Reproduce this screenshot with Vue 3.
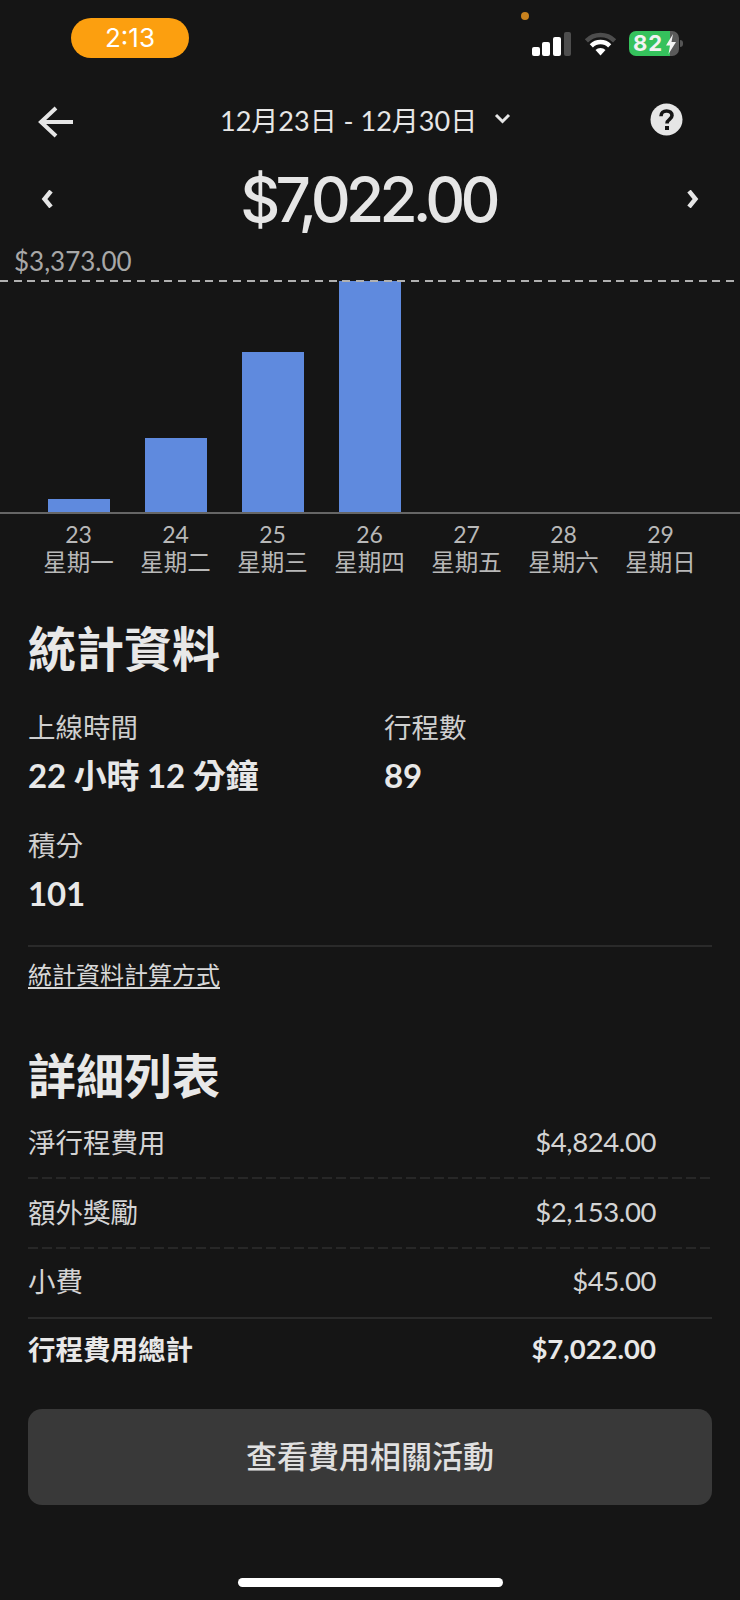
<script setup>
const maxValue = 3373
const plotHeight = 231
const days = [
  { date: '23', name: '星期一', value: 190 },
  { date: '24', name: '星期二', value: 1080 },
  { date: '25', name: '星期三', value: 2336 },
  { date: '26', name: '星期四', value: 3373 },
  { date: '27', name: '星期五', value: 0 },
  { date: '28', name: '星期六', value: 0 },
  { date: '29', name: '星期日', value: 0 }
]
const barHeight = (v) => `${Math.round((v / maxValue) * plotHeight)}px`
const rows = [
  { label: '淨行程費用', amount: '$4,824.00', line: 'dash' },
  { label: '額外獎勵', amount: '$2,153.00', line: 'dash' },
  { label: '小費', amount: '$45.00', line: 'solid' },
  { label: '行程費用總計', amount: '$7,022.00', line: 'none', total: true }
]
</script>

<template>
  <div class="screen">
    <div class="status">
      <div class="pill">2:13</div>
      <div class="status-right">
        <span class="dot"></span>
        <svg class="signal" width="40" height="24" viewBox="0 0 40 24">
          <rect x="0" y="15" width="8" height="9" rx="2" fill="#fff" />
          <rect x="10" y="10" width="8" height="14" rx="2" fill="#fff" />
          <rect x="21" y="5" width="8" height="19" rx="2" fill="#fff" />
          <rect x="32" y="0" width="7" height="24" rx="2" fill="#4d4d4d" />
        </svg>
        <svg class="wifi" width="33" height="24" viewBox="0 0 33 24">
          <path d="M2.4 8.9A20 20 0 0 1 30.6 8.9" fill="none" stroke="#4d4d4d" stroke-width="4.5" />
          <path d="M7.3 13.8A13 13 0 0 1 25.7 13.8" fill="none" stroke="#fff" stroke-width="4.5" />
          <path d="M16.5 23.5L11.5 18A7 7 0 0 1 21.5 18Z" fill="#fff" />
        </svg>
        <div class="battery">
          <span class="battery-num">82</span>
          <svg class="bolt" width="10" height="20" viewBox="0 0 10 20">
            <path d="M7 0L0 11.5H4L2.5 20L10 8H5.5Z" fill="#f4f4f4" />
          </svg>
        </div>
        <span class="nub"></span>
      </div>
    </div>

    <div class="topbar">
      <svg class="back" width="36" height="32" viewBox="0 0 36 32">
        <path d="M18 2L3 16L18 30M3 16H35" fill="none" stroke="#e6e6e6" stroke-width="4" />
      </svg>
      <div class="range">
        <span>12月23日 - 12月30日</span>
        <svg width="17" height="11" viewBox="0 0 17 11">
          <path d="M2 2L8.5 8.5L15 2" fill="none" stroke="#e6e6e6" stroke-width="3" />
        </svg>
      </div>
      <svg class="help" width="33" height="33" viewBox="0 0 33 33">
        <circle cx="16.5" cy="16.5" r="16" fill="#e6e6e6" />
        <path d="M11 13.2C11 9.8 13.4 8 16.6 8C19.8 8 22 9.8 22 12.6C22 16.4 17 16.4 17 20.4" fill="none" stroke="#151515" stroke-width="3.6" />
        <rect x="15" y="23" width="4" height="4" fill="#151515" />
      </svg>
    </div>

    <div class="total">
      <svg width="12" height="18" viewBox="0 0 12 18">
        <path d="M10 1L3.5 9L10 17" fill="none" stroke="#e6e6e6" stroke-width="4.4" />
      </svg>
      <div class="total-num">$7,022.00</div>
      <svg width="12" height="18" viewBox="0 0 12 18">
        <path d="M2 1L8.5 9L2 17" fill="none" stroke="#e6e6e6" stroke-width="4.4" />
      </svg>
    </div>

    <div class="max-label">$3,373.00</div>
    <div class="plot">
      <div v-for="d in days" :key="d.date" class="plot-col">
        <div class="bar" :style="{ height: barHeight(d.value) }"></div>
      </div>
    </div>
    <div class="axis">
      <div v-for="d in days" :key="d.date" class="axis-col">
        <div class="axis-date">{{ d.date }}</div>
        <div class="axis-name">{{ d.name }}</div>
      </div>
    </div>

    <section class="stats">
      <h2 class="title">統計資料</h2>
      <div class="stat-grid">
        <div class="stat">
          <div class="stat-label">上線時間</div>
          <div class="stat-value">22 小時 12 分鐘</div>
        </div>
        <div class="stat">
          <div class="stat-label">行程數</div>
          <div class="stat-value">89</div>
        </div>
        <div class="stat">
          <div class="stat-label">積分</div>
          <div class="stat-value">101</div>
        </div>
      </div>
      <div class="link-wrap"><a class="link">統計資料計算方式</a></div>
    </section>

    <section class="details">
      <h2 class="title">詳細列表</h2>
      <div
        v-for="r in rows"
        :key="r.label"
        class="row"
        :class="['line-' + r.line, { 'row-total': r.total }]"
      >
        <span>{{ r.label }}</span>
        <span class="row-amount">{{ r.amount }}</span>
      </div>
      <button class="action">查看費用相關活動</button>
    </section>

    <div class="home-wrap"><div class="home"></div></div>
  </div>
</template>

<style>
html, body { margin: 0; background: #151515; }
</style>

<style scoped>
.screen {
  width: 740px;
  height: 1600px;
  background: #151515;
  color: #e6e6e6;
  font-family: "Lato", "Noto Sans CJK TC", sans-serif;
  overflow: hidden;
  display: flex;
  flex-direction: column;
}
.status {
  height: 96px;
  flex: none;
  position: relative;
}
.pill {
  position: absolute;
  left: 71px;
  top: 18px;
  width: 118px;
  height: 40px;
  border-radius: 20px;
  background: #fc9f0f;
  color: #fff;
  font: 26px/40px "Inter", sans-serif;
  text-align: center;
}
.dot {
  position: absolute;
  left: 521px;
  top: 12px;
  width: 8px;
  height: 8px;
  border-radius: 50%;
  background: #c9821e;
}
.signal { position: absolute; left: 532px; top: 32px; }
.wifi { position: absolute; left: 584px; top: 32px; }
.battery {
  position: absolute;
  left: 629px;
  top: 31px;
  width: 50px;
  height: 25px;
  border-radius: 7px;
  overflow: hidden;
  background: linear-gradient(90deg, #35c25c 0 41px, #5a5a5a 41px);
  display: flex;
  align-items: center;
}
.battery-num {
  font: 700 22px/25px "Inter", sans-serif;
  color: #f2f2f2;
  margin-left: 4px;
  letter-spacing: 1px;
}
.bolt { position: absolute; left: 37px; top: 3px; }
.nub {
  position: absolute;
  left: 680px;
  top: 40px;
  width: 3px;
  height: 7px;
  border-radius: 0 3px 3px 0;
  background: #555;
}
.topbar {
  height: 46px;
  flex: none;
  display: flex;
  align-items: center;
  padding: 0 57px 0 38px;
}
.back { margin-top: 6px; }
.range {
  display: flex;
  align-items: center;
  gap: 17px;
  margin-left: 146px;
  font-size: 27px;
  white-space: nowrap;
}
.range svg { margin-top: -1px; }
.help { margin-left: auto; }
.total {
  height: 78px;
  margin-top: 18px;
  flex: none;
  display: flex;
  align-items: center;
  justify-content: space-between;
  padding: 0 41px;
}
.total-num {
  font: 500 62px/78px "Inter", sans-serif;
  letter-spacing: -4.8px;
  padding-top: 2px;
  margin-right: 4px;
}
.max-label {
  height: 30px;
  margin-top: 8px;
  padding-left: 14px;
  font-size: 26px;
  line-height: 30px;
  color: #a8a8a8;
  flex: none;
}
.plot {
  position: relative;
  margin-top: 5px;
  height: 231px;
  flex: none;
  display: flex;
  padding-left: 30px;
  border-bottom: 2px solid #666;
}
.plot::before {
  content: "";
  position: absolute;
  left: 0;
  right: 0;
  top: -1px;
  height: 2px;
  background: repeating-linear-gradient(90deg, #b0b0b0 0 8px, transparent 8px 13.7px);
}
.plot-col {
  width: 97px;
  display: flex;
  align-items: flex-end;
  justify-content: center;
}
.bar { width: 62px; background: #5f8ade; }
.axis {
  display: flex;
  padding-left: 30px;
  flex: none;
  margin-top: 6px;
}
.axis-col { width: 97px; text-align: center; color: #b8b8b8; }
.axis-date { font-size: 23px; line-height: 28px; }
.axis-name { font-size: 23.5px; line-height: 28px; white-space: nowrap; }
.stats { padding: 43px 28px 0; flex: none; }
.title {
  margin: 0;
  font-size: 48px;
  line-height: 60px;
  font-weight: 700;
  color: #e8e8e8;
}
.stat-grid {
  display: grid;
  grid-template-columns: 356px 1fr;
  row-gap: 27px;
  margin-top: 29px;
}
.stat-label { font-size: 27.5px; line-height: 40px; color: #cfcfcf; }
.stat-value { font-size: 33px; line-height: 48px; font-weight: 700; margin-top: 3px; color: #e8e8e8; white-space: nowrap; letter-spacing: -0.2px; }
.link-wrap {
  margin-top: 28px;
  border-top: 2px solid #2a2a2a;
  padding-top: 11px;
}
.link {
  font-size: 24px;
  line-height: 34px;
  text-decoration: underline;
  text-underline-offset: 3px;
  color: #d8d8d8;
}
.details { padding: 54px 28px 0; flex: none; }
.details .title { margin-bottom: 3px; }
.row {
  box-sizing: border-box;
  height: 70px;
  display: flex;
  align-items: center;
  justify-content: space-between;
  padding: 0 56px 6px 0;
  font-size: 27.5px;
  color: #d4d4d4;
}
.row-amount { font-weight: 400; letter-spacing: -0.4px; }
.line-dash { background: repeating-linear-gradient(90deg, #272727 0 10px, transparent 10px 14px) left bottom / 100% 2px no-repeat; }
.line-solid { border-bottom: 2px solid #2a2a2a; }
.row-total { font-weight: 700; color: #e8e8e8; padding-bottom: 12px; }
.row-total .row-amount { font-weight: 700; letter-spacing: 0; }
.action {
  display: block;
  width: 100%;
  height: 96px;
  margin-top: 20px;
  padding: 0 0 6px;
  border: 0;
  border-radius: 14px;
  background: #393939;
  color: #e0e0e0;
  font: 500 31px "Lato", "Noto Sans CJK TC", sans-serif;
}
.home-wrap {
  margin-top: auto;
  padding-bottom: 13px;
  display: flex;
  justify-content: center;
}
.home { width: 265px; height: 9px; border-radius: 5px; background: #fff; }
</style>
